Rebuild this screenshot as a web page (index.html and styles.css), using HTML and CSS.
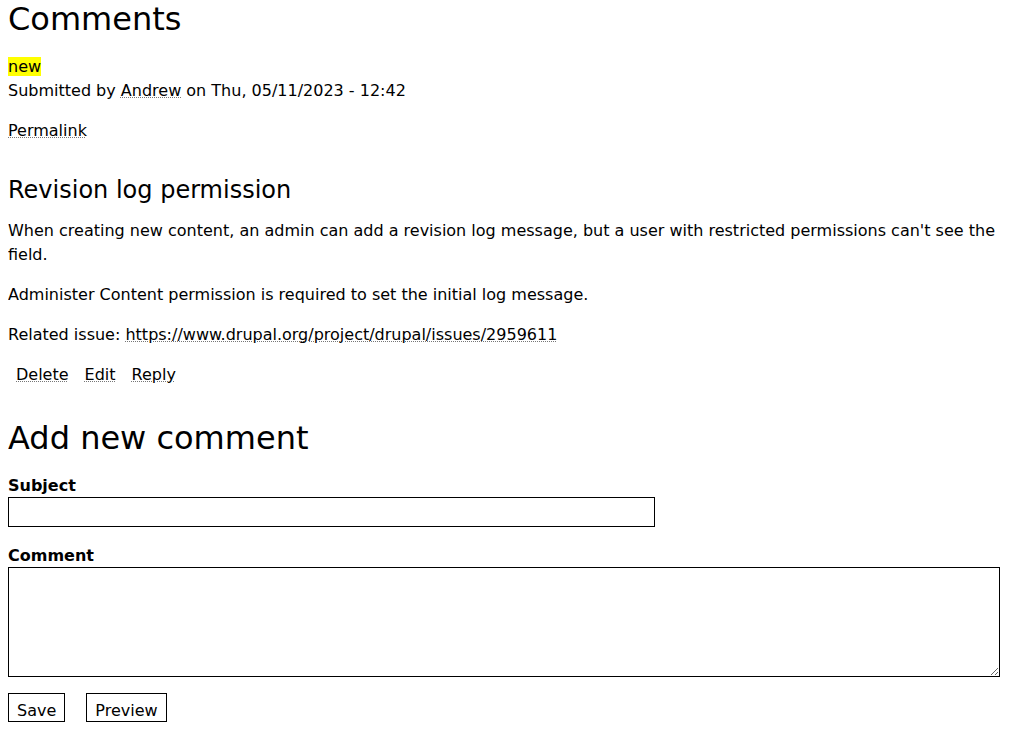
FILE: index.html
```
<!DOCTYPE html>
<html lang="en">
<head>
<meta charset="utf-8">
<title>Comments</title>
<link rel="stylesheet" href="styles.css">
</head>
<body>
<section class="comments">
  <h2 class="section-title">Comments</h2>
  <article class="comment">
    <div class="new-line"><mark class="new-mark">new</mark></div>
    <footer class="comment-meta">
      <p class="submitted">Submitted by <a class="link" href="#">Andrew</a> on Thu, 05/11/2023 - 12:42</p>
      <p class="permalink"><a class="link" href="#">Permalink</a></p>
    </footer>
    <div class="comment-content">
      <h3 class="comment-title">Revision log permission</h3>
      <p>When creating new content, an admin can add a revision log message, but a user with restricted permissions can't see the field.</p>
      <p>Administer Content permission is required to set the initial log message.</p>
      <p>Related issue: <a class="link" href="#">https://www.drupal.org/project/drupal/issues/2959611</a></p>
    </div>
    <ul class="comment-links">
      <li><a class="link" href="#">Delete</a></li>
      <li><a class="link" href="#">Edit</a></li>
      <li><a class="link" href="#">Reply</a></li>
    </ul>
  </article>
  <h2 class="form-title">Add new comment</h2>
  <form class="comment-form">
    <div class="field">
      <label class="field-label" for="subject">Subject</label>
      <input class="text-input" id="subject" type="text">
    </div>
    <div class="field">
      <label class="field-label" for="comment">Comment</label>
      <textarea class="text-area" id="comment"></textarea>
    </div>
    <div class="actions">
      <button class="btn" type="button">Save</button>
      <button class="btn" type="button">Preview</button>
    </div>
  </form>
</section>
</body>
</html>
```
FILE: styles.css
```
html {
  font-family: "DejaVu Sans", sans-serif;
  font-size: 16px;
  line-height: 1.5;
  color: #000;
  background: #fff;
}

body {
  margin: 0 8px;
}

p {
  margin: 0 0 16px;
}

.link {
  color: #000;
  text-decoration-line: underline;
  text-decoration-style: dotted;
  text-decoration-color: #777;
  text-decoration-thickness: 1px;
}

.section-title {
  font-size: 32px;
  font-weight: normal;
  line-height: normal;
  margin: 0 0 17px;
}

.new-line {
  margin: 0;
}

.new-mark {
  background: #ff0;
  color: #000;
}

.comment-meta .submitted {
  margin: 0 0 16px;
}

.comment-title {
  font-size: 24px;
  font-weight: normal;
  line-height: normal;
  margin: 33px 0 15px;
}

.comment-links {
  list-style: none;
  margin: 0;
  padding: 0 0 0 8px;
  display: flex;
  gap: 16px;
}

.form-title {
  font-size: 32px;
  font-weight: normal;
  line-height: normal;
  margin: 32px 0 15px;
}

.comment-form {
  margin: 0;
}

.field {
  margin: 0 0 16px;
}

.field-label {
  display: block;
  font-weight: bold;
  padding-top: 3px;
  line-height: 22px;
}

.field + .field {
  margin-top: -1px;
}

.text-input {
  display: block;
  box-sizing: border-box;
  width: 647px;
  height: 30px;
  margin: 0;
  border: 1px solid #000;
  border-radius: 0;
  padding: 2px 4px;
  font-family: "DejaVu Sans", sans-serif;
  font-size: 16px;
}

.text-area {
  display: block;
  box-sizing: border-box;
  width: 992px;
  height: 110px;
  margin: 0;
  border: 1px solid #000;
  border-radius: 0;
  padding: 2px 4px;
  font-family: "DejaVu Sans", sans-serif;
  font-size: 16px;
}

.actions {
  display: flex;
  gap: 21px;
}

.btn {
  font-family: "DejaVu Sans", sans-serif;
  font-size: 16px;
  line-height: normal;
  color: #000;
  background: #fff;
  border: 1px solid #000;
  border-radius: 0;
  padding: 7px 8px 1px;
  margin: 0;
}
```
